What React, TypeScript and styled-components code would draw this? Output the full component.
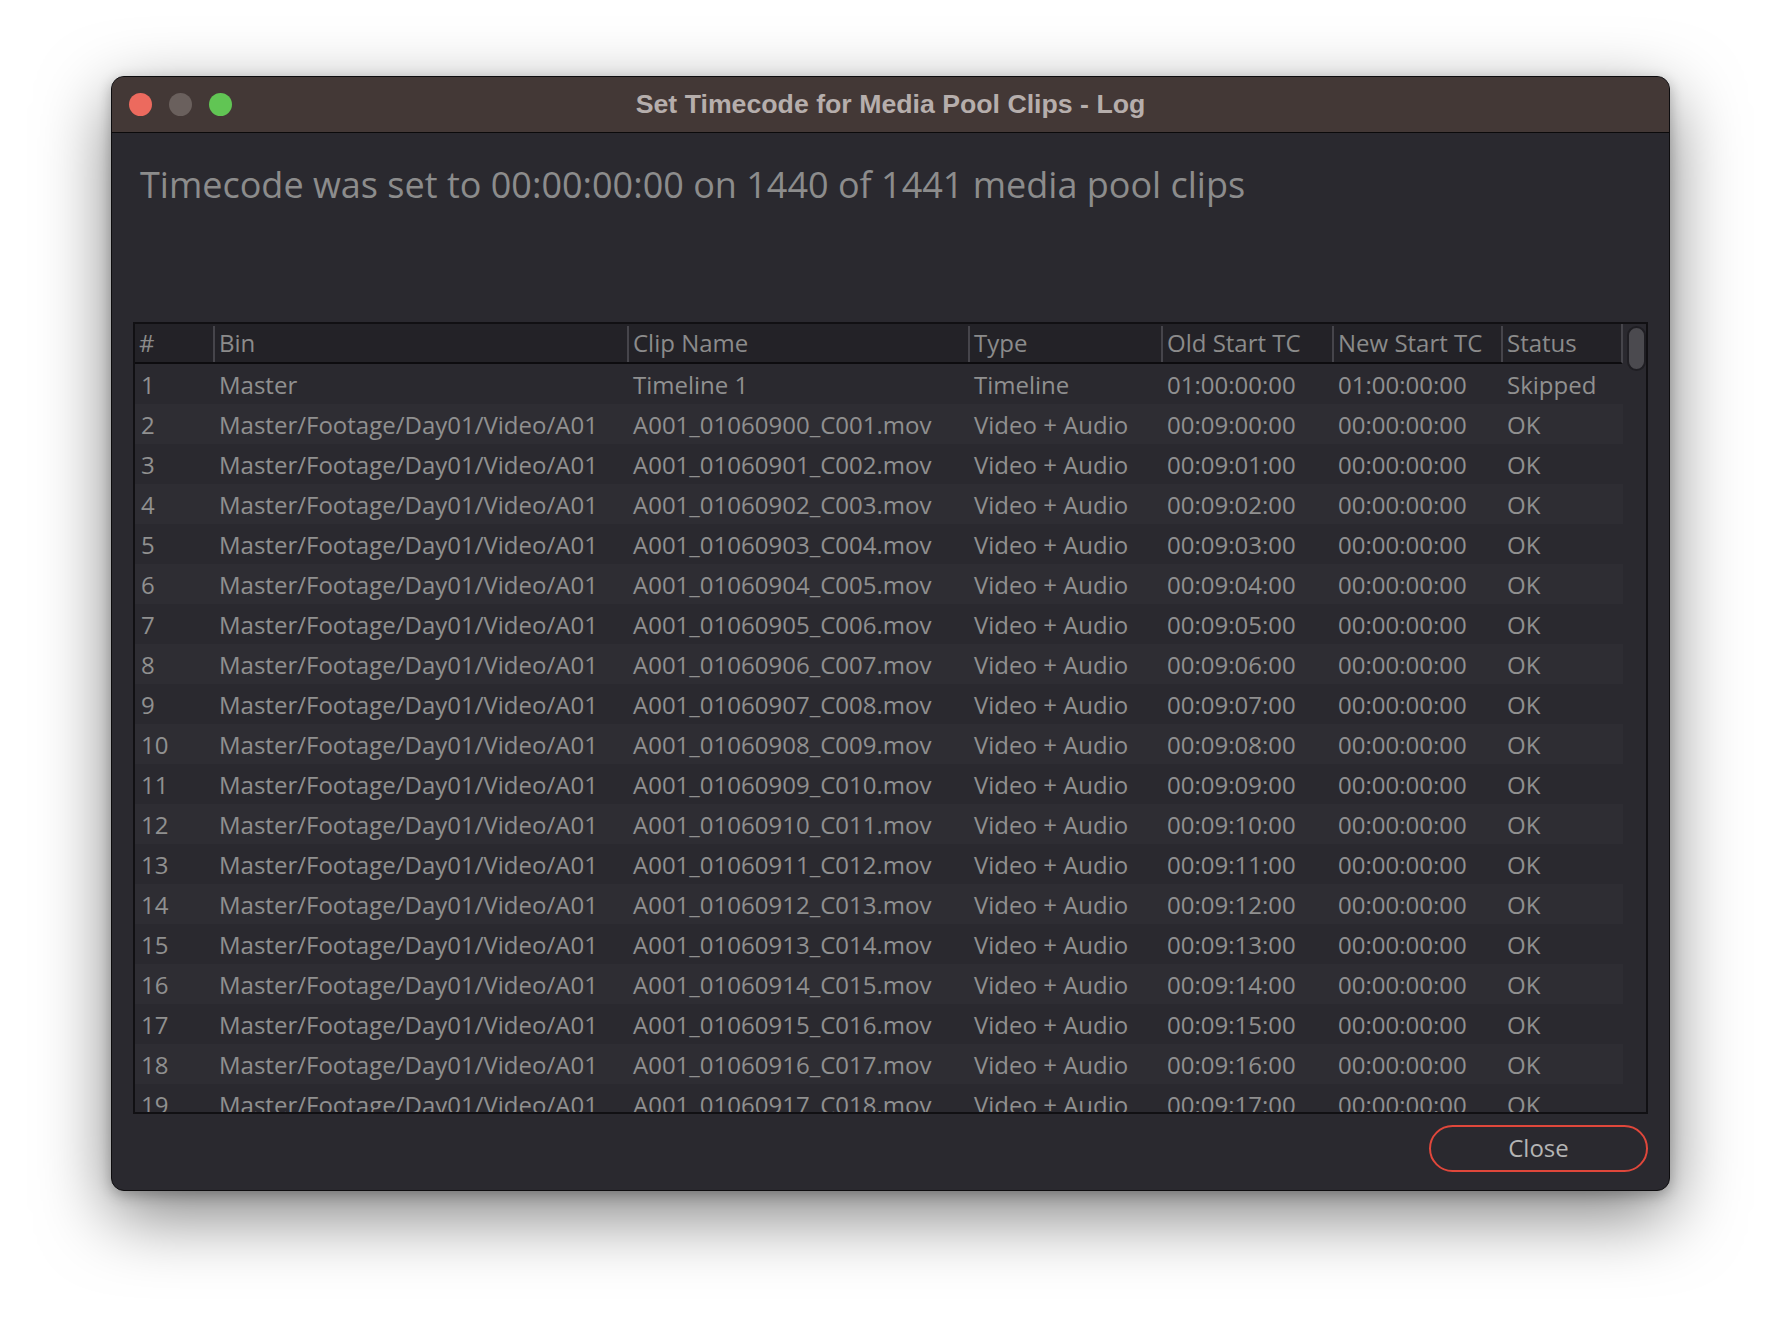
import styled, { createGlobalStyle } from "styled-components";

const GlobalStyle = createGlobalStyle`
  html, body {
    margin: 0;
    background: #ffffff;
  }
  * {
    box-sizing: border-box;
  }
`;

const Page = styled.div`
  width: 1782px;
  height: 1340px;
  padding: 76px 0 0 111px;
  font-family: "Open Sans", "Noto Sans", sans-serif;
`;

const Window = styled.div`
  width: 1559px;
  height: 1115px;
  display: flex;
  flex-direction: column;
  border-radius: 13px;
  overflow: hidden;
  background: #2a292f;
  border: 1px solid #0d0c0e;
  box-shadow: 0 24px 70px rgba(0, 0, 0, 0.5), 0 4px 14px rgba(0, 0, 0, 0.25);
`;

const TitleBar = styled.div`
  flex: none;
  height: 56px;
  display: grid;
  grid-template-columns: 1fr auto 1fr;
  align-items: center;
  background: #433836;
  border-bottom: 1px solid #0b0a0b;
`;

const Lights = styled.div`
  display: flex;
  gap: 17px;
  padding-left: 17px;
`;

const Light = styled.span<{ $color: string }>`
  width: 23px;
  height: 23px;
  border-radius: 50%;
  background: ${({ $color }) => $color};
`;

const Title = styled.div`
  font-family: "Liberation Sans", Arial, sans-serif;
  font-weight: 700;
  font-size: 26.7px;
  color: #b6aeac;
  padding-bottom: 1px;
`;

const Body = styled.div`
  flex: 1;
  display: flex;
  flex-direction: column;
  padding: 27px 21px 20px 21px;
`;

const Heading = styled.h1`
  margin: 0 0 0 7px;
  font-weight: 400;
  font-size: 36px;
  line-height: 49px;
  color: #8c8c8c;
`;

const TableBox = styled.div`
  flex: none;
  margin-top: 113px;
  height: 792px;
  border: 2px solid #111013;
  display: grid;
  grid-template-columns: 1488px 1fr;
  overflow: hidden;
`;

const TableMain = styled.div`
  display: flex;
  flex-direction: column;
  overflow: hidden;
`;

const COLS = "78px 414px 341px 193px 171px 169px 122px";

const HeaderRow = styled.div`
  flex: none;
  display: grid;
  grid-template-columns: ${COLS};
  height: 40px;
  background: #232227;
  border-bottom: 2px solid #0d0c0f;
  border-right: 2px solid #46454b;
`;

const HeaderCell = styled.div<{ $first?: boolean }>`
  padding-left: ${({ $first }) => ($first ? "4px" : "6px")};
  background: ${({ $first }) =>
    $first ? "none" : "linear-gradient(#46454b, #46454b) left 2px / 2px calc(100% - 2px) no-repeat"};
  font-size: 24px;
  line-height: 37px;
  height: 38px;
  color: #8b8b8b;
  white-space: nowrap;
`;

const Row = styled.div<{ $even: boolean }>`
  flex: none;
  display: grid;
  grid-template-columns: ${COLS};
  height: 40px;
  background: ${({ $even }) => ($even ? "#2e2d33" : "#2a292f")};
`;

const Cell = styled.div`
  padding-left: 6px;
  font-size: 24px;
  line-height: 42px;
  color: #909090;
  white-space: nowrap;
  overflow: hidden;
`;

const ScrollTrack = styled.div`
  padding: 2px 2px 0 4px;
`;

const ScrollThumb = styled.div`
  width: 19px;
  height: 45px;
  border-radius: 10px;
  background: #4b4a4f;
  border: 2px solid #1f1e23;
`;

const Footer = styled.div`
  display: flex;
  justify-content: flex-end;
  margin-top: 11px;
`;

const CloseButton = styled.button`
  width: 219px;
  height: 47px;
  border-radius: 24px;
  border: 2px solid #e0473b;
  background: transparent;
  color: #b5b5b5;
  font-family: "Open Sans", "Noto Sans", sans-serif;
  font-size: 24px;
  padding: 0 0 3px;
  cursor: pointer;
`;

const headers = ["#", "Bin", "Clip Name", "Type", "Old Start TC", "New Start TC", "Status"];

const pad = (n: number, w: number) => String(n).padStart(w, "0");

type LogRow = string[];

const rows: LogRow[] = [
  ["1", "Master", "Timeline 1", "Timeline", "01:00:00:00", "01:00:00:00", "Skipped"],
];
for (let n = 2; n <= 20; n++) {
  rows.push([
    String(n),
    "Master/Footage/Day01/Video/A01",
    `A001_010609${pad(n - 2, 2)}_C${pad(n - 1, 3)}.mov`,
    "Video + Audio",
    `00:09:${pad(n - 2, 2)}:00`,
    "00:00:00:00",
    "OK",
  ]);
}

export default function App() {
  return (
    <Page>
      <GlobalStyle />
      <Window>
        <TitleBar>
          <Lights>
            <Light $color="#ec6a5e" />
            <Light $color="#6a605d" />
            <Light $color="#61c554" />
          </Lights>
          <Title>Set Timecode for Media Pool Clips - Log</Title>
          <div />
        </TitleBar>
        <Body>
          <Heading>Timecode was set to 00:00:00:00 on 1440 of 1441 media pool clips</Heading>
          <TableBox>
            <TableMain>
              <HeaderRow>
                {headers.map((h, i) => (
                  <HeaderCell key={h} $first={i === 0}>
                    {h}
                  </HeaderCell>
                ))}
              </HeaderRow>
              {rows.map((r, i) => (
                <Row key={r[0]} $even={i % 2 === 1}>
                  {r.map((c, j) => (
                    <Cell key={j}>{c}</Cell>
                  ))}
                </Row>
              ))}
            </TableMain>
            <ScrollTrack>
              <ScrollThumb />
            </ScrollTrack>
          </TableBox>
          <Footer>
            <CloseButton>Close</CloseButton>
          </Footer>
        </Body>
      </Window>
    </Page>
  );
}
